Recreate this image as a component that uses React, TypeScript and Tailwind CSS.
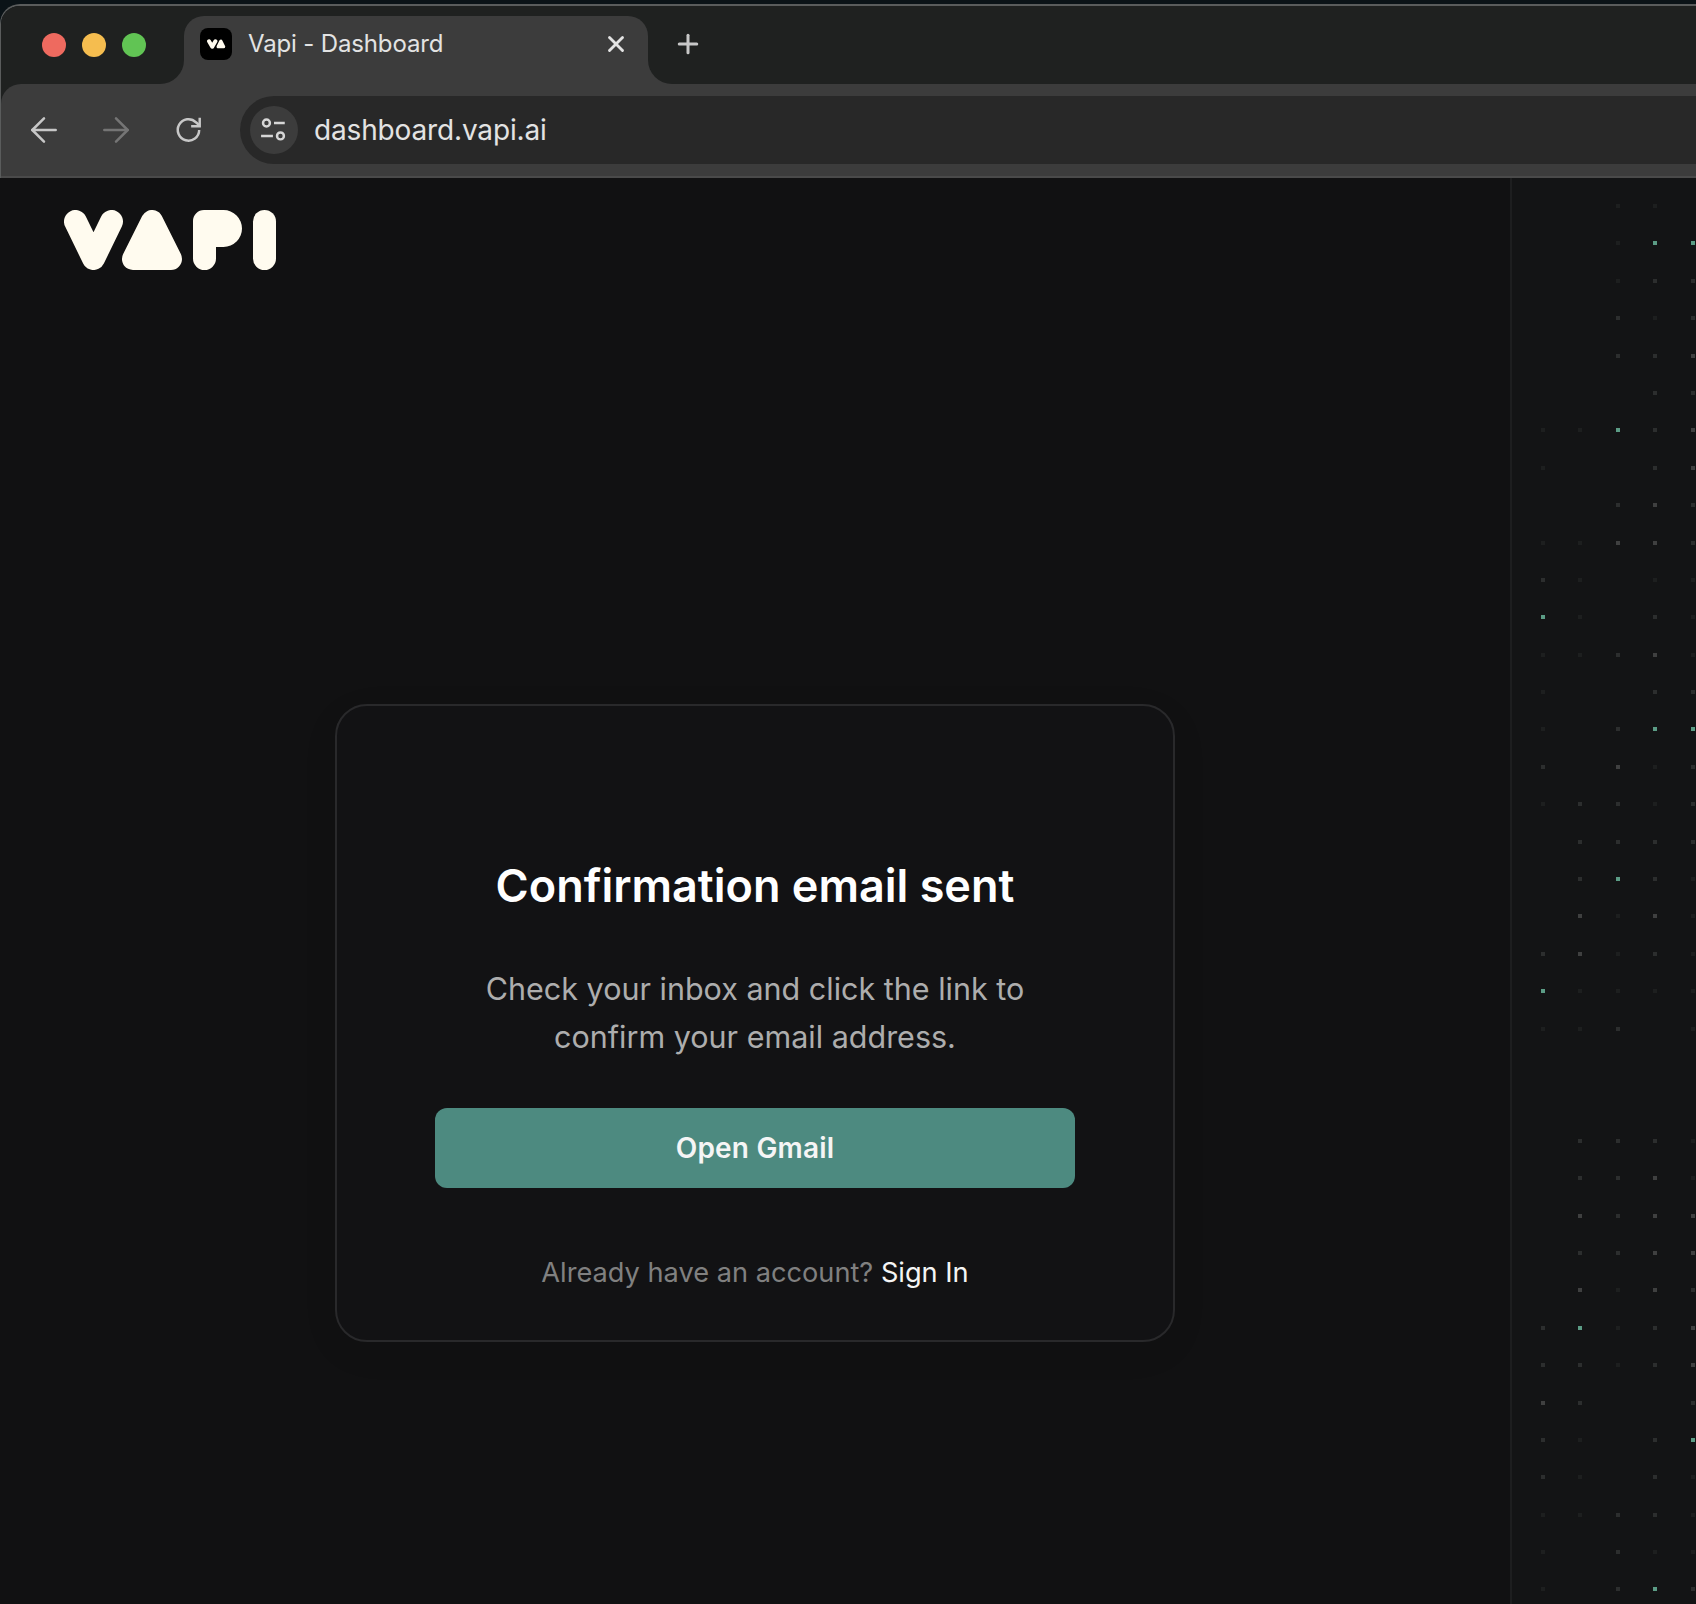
import { ArrowLeft, ArrowRight, Plus, X } from "lucide-react";

// one string per row, five columns: . none, 1-3 grey levels, g green
const dotRows = [
  "..11.", "..1gg", "..122", "..212", "..223", "...22", "11g23", "1..23", "..232", "11332",
  "21.11", "g1.21", "11231", "1..22", "1.2gg", "2.312", "12212", ".2222", ".2g21", ".3131",
  "23121", "g1111", "112.1", ".....", ".....", ".2221", ".2231", ".3233", ".2233", ".3132",
  "2g123", "22123", "32..2", "21.2g", "21.21", "11221", "1.211", "1.2g2",
];

const dotColors: Record<string, string> = {
  ".": "",
  "1": "bg-[#1d1f1f]",
  "2": "bg-[#2c2e2e]",
  "3": "bg-[#3f4040]",
  g: "bg-[#5b9c85]",
};

const VapiLogo = () => (
  <svg width="213" height="60" viewBox="0 0 213 60" fill="#FFFBEF" stroke="none">
    <polyline points="11.5,11.5 29.5,48.5 47.5,11.5" fill="none" stroke="#FFFBEF" strokeWidth="23" strokeLinecap="round" strokeLinejoin="round" />
    <polygon points="88,11 69,49 107,49" stroke="#FFFBEF" strokeWidth="22" strokeLinejoin="round" />
    <path d="M129 11a11 11 0 0 1 11-11h19.5a18.5 18.5 0 0 1 0 37H152v11.5a11.5 11.5 0 0 1-23 0Z" />
    <rect x="189" width="23" height="60" rx="11.5" />
  </svg>
);

const ReloadIcon = () => (
  <svg width="30" height="30" viewBox="0 0 28 28" fill="none" stroke="#c7c7c7" strokeWidth="2.3">
    <path d="M23.5 14a10 10 0 1 1-3-7.2l3 2.7" />
    <path d="M24 2.5v8h-8" />
  </svg>
);

const TuneIcon = () => (
  <svg width="28" height="28" viewBox="0 0 26 26" fill="none" stroke="#d6d6d6" strokeWidth="2.3">
    <circle cx="6" cy="6.5" r="3.2" />
    <path d="M13 6.5h10M1 18.5h11" />
    <circle cx="19" cy="18.5" r="3.2" />
  </svg>
);

const TabBar = () => (
  <div className="flex h-[78px] items-end bg-[#1f2120] pl-[183px]">
    <div className="absolute left-[41px] top-[27px] flex gap-4">
      <span className="size-6 rounded-full bg-[#ee6a5f]" />
      <span className="size-6 rounded-full bg-[#f5bd4f]" />
      <span className="size-6 rounded-full bg-[#61c454]" />
    </div>

    <div className="relative flex h-[68px] w-[464px] items-center rounded-t-[20px] bg-[#3c3c3c] pb-3 pl-4 pr-[19px]">
      <div className="absolute bottom-0 left-[-24px] size-6 bg-[#3c3c3c]">
        <div className="size-6 rounded-br-[24px] bg-[#1f2120]" />
      </div>
      <div className="absolute bottom-0 right-[-24px] size-6 bg-[#3c3c3c]">
        <div className="size-6 rounded-bl-[24px] bg-[#1f2120]" />
      </div>
      <div className="flex size-8 items-center justify-center rounded-lg bg-black">
        <svg width="20" height="10" viewBox="0 0 213 110" fill="#FFFBEF">
          <polyline points="30,25 65,85 100,25" fill="none" stroke="#FFFBEF" strokeWidth="44" strokeLinecap="round" strokeLinejoin="round" />
          <polygon points="160,25 130,85 190,85" stroke="#FFFBEF" strokeWidth="36" strokeLinejoin="round" />
        </svg>
      </div>
      <span className="ml-4 flex-1 font-['Inter'] text-[24px] tracking-[-0.15px] text-[#e3e3e3]">Vapi - Dashboard</span>
      <X size={26} strokeWidth={2.6} className="text-[#e3e3e3]" />
    </div>

    <Plus size={30} strokeWidth={2.4} className="mb-[25px] ml-[25px] text-[#c7c7c7]" />
  </div>
);

const Toolbar = () => (
  <div className="bg-[#1f2120]">
    <div className="flex h-[94px] items-center rounded-tl-[20px] border-b-2 border-[#4a4a4a] bg-[#3c3c3c] pl-[23px]">
      <ArrowLeft size={40} strokeWidth={1.5} className="text-[#c7c7c7]" />
      <ArrowRight size={40} strokeWidth={1.5} className="ml-[32px] text-[#757575]" />
      <div className="ml-[38px]">
        <ReloadIcon />
      </div>
      <div className="ml-[36px] flex h-[68px] flex-1 items-center rounded-l-full bg-[#282828] pl-[10px]">
        <div className="flex size-12 items-center justify-center rounded-full bg-[#3c3c3c]">
          <TuneIcon />
        </div>
        <span className="ml-4 font-['Inter'] text-[28px] tracking-[-0.15px] text-[#e3e3e3]">dashboard.vapi.ai</span>
      </div>
    </div>
  </div>
);

const ConfirmCard = () => (
  <div className="mx-auto flex h-[638px] w-[840px] flex-col items-center rounded-[32px] border-2 border-[#29292b] bg-[#121214] pt-[150px] font-['Inter'] shadow-[0_10px_40px_rgba(0,0,0,0.05)]">
    <h1 className="text-[45px] leading-[60px] font-semibold text-white">Confirmation email sent</h1>
    <p className="mt-[49px] text-center text-[30.5px] leading-[48px] text-[#adadad]">
      Check your inbox and click the link to
      <br />
      confirm your email address.
    </p>
    <button className="mt-[47px] h-[80px] w-[640px] rounded-xl bg-[#4d8a80] text-[28px] font-semibold tracking-[0.2px] text-[#f5f5f5]">
      Open Gmail
    </button>
    <p className="mt-[65px] text-[27.2px] leading-[40px] text-[#808080]">
      Already have an account? <span className="text-[#f5f5f5]">Sign In</span>
    </p>
  </div>
);

const DotPanel = () => (
  <aside className="w-[186px] border-l-2 border-[#1d1e1f] bg-[#131415] pl-[29px] pt-[26px]">
    <div className="grid grid-cols-[repeat(5,37.4px)] auto-rows-[37.4px]">
      {dotRows.flatMap((row, r) =>
        row.split("").map((level, c) => (
          <div key={`${r}-${c}`}>
            {level !== "." && <div className={`size-1 ${dotColors[level]}`} />}
          </div>
        ))
      )}
    </div>
  </aside>
);

export default function App() {
  return (
    <div className="relative flex h-[1604px] w-[1696px] flex-col overflow-hidden bg-[#0b1317] pt-1">
      <div className="relative overflow-hidden rounded-tl-[20px] border-l border-t-2 border-[#5a5c5c]">
        <TabBar />
        <Toolbar />
      </div>
      <div className="flex flex-1 overflow-hidden bg-[#111112]">
        <main className="flex-1 pt-[32px]">
          <div className="pl-[64px]">
            <VapiLogo />
          </div>
          <div className="mt-[434px]">
            <ConfirmCard />
          </div>
        </main>
        <DotPanel />
      </div>
    </div>
  );
}
